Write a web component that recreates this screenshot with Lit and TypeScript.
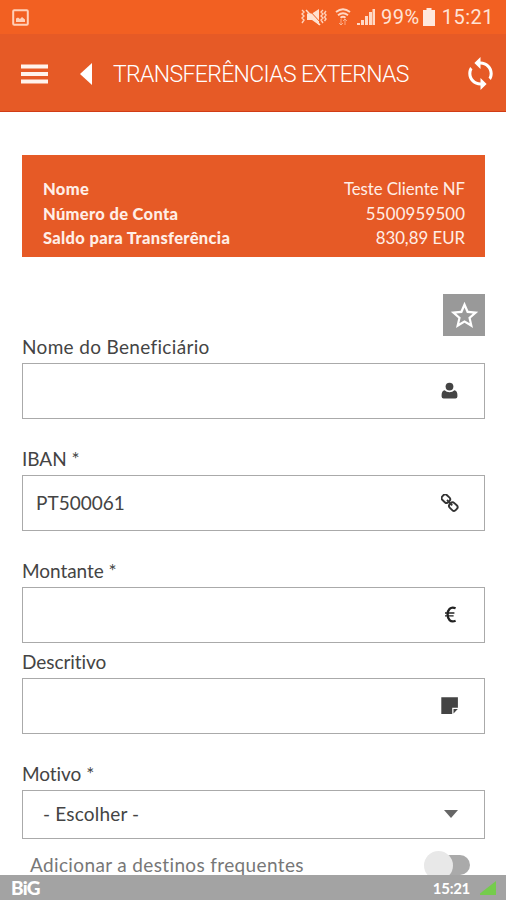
import { LitElement, html, css, svg } from "lit";
import { customElement } from "lit/decorators.js";

const icons = {
  user: svg`<circle cx="8.5" cy="4.600" r="3.900"/><path d="M3.600 8.200Q.6 9 .6 13v1.600q0 2 2 2h11.800q2 0 2-2V13q0-4-3-4.800Q11.500 10.200 8.500 10.200T3.600 8.200Z"/>`,
  link: svg`<g fill="none" stroke="#333" stroke-width="1.900"><rect x="-4.200" y="-3.300" width="8.400" height="6.600" rx="2.600" transform="translate(4.900 4.700) rotate(43)"/><rect x="-4.200" y="-3.300" width="8.400" height="6.600" rx="2.600" transform="translate(12.300 12.600) rotate(43)"/><path d="M6 6l5.200 5.400"/></g>`,
  euro: svg`<path fill="none" stroke="#222" stroke-width="2.300" d="M14.600 2.300C9.200.200 6.600 4 6.600 8.500s2.600 8.300 8 6.200"/><path stroke="#222" stroke-width="1.300" d="M4 7h9.400M4 9.900h8.600"/>`,
  note: svg`<path d="M.3.200h16.600v10.500h-5.700v6.200H.3Z"/><path d="M12.500 12h4.300l-4.300 4.600Z"/>`,
};

@customElement("app-root")
export class AppRoot extends LitElement {
  static styles = css`
    :host { display: flex; flex-direction: column; height: 900px; overflow: hidden; background: #fff; color: #444; font-family: Lato, sans-serif; font-size: 19px; font-variant-ligatures: none; box-sizing: border-box; }
    * { box-sizing: border-box; }
    svg { display: block; flex: none; }
    .status { height: 34px; flex: none; background: #f26022; display: flex; align-items: center; padding: 0 12px 0 12px; color: #ffe3d5; font-family: Roboto, sans-serif; font-size: 20px; }
    .status .right { margin-left: auto; display: flex; align-items: center; }
    .wifi { margin: 0 4px 0 0; }
    .battery { margin: 0 7px 0 3px; }
    .pct { margin-left: 6px; letter-spacing: .5px; }
    .clock { letter-spacing: .5px; }
    .header { height: 78px; flex: none; background: #e65a26; border-bottom: 1px solid #d13c16; display: flex; align-items: center; padding: 2px 11px 0 21px; color: #fff; }
    .back { margin-left: 32px; }
    .title { margin-left: 21px; padding-top: 2px; font-family: Roboto, sans-serif; font-weight: 300; font-size: 23px; white-space: nowrap; letter-spacing: -.65px; }
    .sync { margin-left: auto; }
    .content { flex: 1; min-height: 0; overflow: hidden; padding: 43px 21px 0 22px; display: flex; flex-direction: column; }
    .card { height: 102px; flex: none; background: #e65a26; color: #ffeee6; padding: 22px 20px 0 21px; font-size: 16.800px; }
    .row { height: 24.500px; display: flex; justify-content: space-between; align-items: center; line-height: 24px; }
    .row b { font-weight: 900; font-size: 16.500px; letter-spacing: .32px; }
    .star { width: 42px; height: 42px; flex: none; background: #999; margin: 37px 0 0; align-self: flex-end; display: grid; place-items: center; }
    .label { height: 27px; flex: none; line-height: 21px; white-space: nowrap; letter-spacing: .33px; }
    .label.tight { letter-spacing: -.05px; }
    .box { height: 56px; flex: none; border: 1.500px solid #aaa; display: flex; align-items: center; padding: 0 25px 1px 13px; margin-bottom: 29px; }
    .box svg { margin-left: auto; margin-top: 1px; fill: #444; }
    .box.close { margin-bottom: 8px; }
    .box.select { height: 49px; padding: 0 26px 2px 20px; margin-bottom: 11px; letter-spacing: .18px; }
    .toggle-row { display: flex; justify-content: space-between; color: #777; padding: 0 15px 0 8px; height: 26px; align-items: flex-start; flex: none; letter-spacing: .36px; line-height: 29px; white-space: nowrap; }
    .toggle { width: 47px; height: 30px; flex: none; display: flex; align-items: center; }
    .knob { width: 29px; height: 29px; border-radius: 50%; background: #e8e8e8; flex: none; }
    .track { width: 32px; height: 20px; flex: none; border-radius: 10px; background: #aaa; margin: 0 -46px 0 15px; }
    .footer { height: 25px; flex: none; background: #a3a3a3; color: #fff; display: flex; align-items: center; padding: 0 10px 0 11px; font-size: 15px; }
    .brand { font-weight: 900; font-size: 19px; letter-spacing: -.8px; }
    .time { margin-left: auto; margin-right: 10px; font-weight: 700; letter-spacing: -.3px; }
  `;

  private row(name: string, value: string, spacing: number) {
    return html`<div class="row"><b>${name}</b><span style="letter-spacing:${spacing}px;margin-right:${-spacing}px">${value}</span></div>`;
  }

  private field(label: string, icon: unknown, value = "", close = false, tight = false) {
    return html`<div class="label ${tight ? "tight" : ""}">${label}</div>
      <div class="box ${close ? "close" : ""}"><span>${value}</span><svg width="18" height="18" viewBox="0 0 18 18">${icon}</svg></div>`;
  }

  render() {
    return html`
      <div class="status">
        <svg width="17" height="17" viewBox="0 0 17 17" fill="none"><rect x="1.200" y="1.200" width="14.600" height="14.600" rx="1" stroke="#ffd0b8" stroke-width="2"/><path fill="#ffd0b8" d="M4 13V9.500l2-1 2 1.500 2-2 3 2.500V13Z"/></svg>
        <div class="right">
          <svg width="26" height="18" viewBox="0 0 26 18"><g fill="none" stroke="#ffd0b8" stroke-width="1.400"><path d="M1 2l2 2-2 2 2 2-2 2 2 2-2 3M22 2l-2 2 2 2-2 2 2 2-2 2 2 3M25 3l-1.500 2 1.500 2-1.500 2 1.500 2-1.500 2"/></g><path fill="#ffe0cf" d="M6 5.500h5L18 1v16l-7-5H6Z"/><path stroke="#f26022" stroke-width="1" d="M8 2l12 13"/><path stroke="#ffe0cf" stroke-width="1.500" d="M5 2l14 15"/></svg>
          <svg class="wifi" width="26" height="18" viewBox="0 0 26 18"><g fill="none" stroke="#ffd8c5" stroke-width="1.900"><path d="M9 4q7-5.500 14 0M11 7.200q5-4 10 0M13.500 9.800q2.500-2 5 0"/><path d="M14 11v6M12 15l2 2 2-2M18 17v-6M16 13l2-2 2 2" stroke-width="1" opacity=".6"/></g></svg>
          <svg width="18" height="18" viewBox="0 0 18 18" fill="#ffd8c5"><path d="M0 15h3v2H0zM4 12h3v5H4zM8 8h3v9H8zM12 4h3v13h-3zM15.500 1H18v16h-2.500z"/></svg>
          <span class="pct">99%</span>
          <svg class="battery" width="12" height="18" viewBox="0 0 12 18"><path fill="#ffe8dd" d="M3.500 0h5v2H12v16H0V2h3.500Z"/></svg>
          <span class="clock">15:21</span>
        </div>
      </div>
      <div class="header">
        <svg width="27" height="20" viewBox="0 0 27 20" fill="#fff3ec"><path d="M0 .500h27v4H0zM0 8h27v4H0zM0 15.500h27v4H0z"/></svg>
        <svg class="back" width="12" height="22" viewBox="0 0 12 22"><path fill="#fff" d="M12 0v22L0 11Z"/></svg>
        <div class="title">TRANSFERÊNCIAS EXTERNAS</div>
        <svg class="sync" width="29" height="33" viewBox="2.500 1 19 22" preserveAspectRatio="none"><path fill="#fff" d="M12 4V1L8 5l4 4V6c3.310 0 6 2.690 6 6 0 1.010-.250 1.970-.700 2.800l1.460 1.460C19.540 15.030 20 13.570 20 12c0-4.420-3.580-8-8-8zm0 14c-3.310 0-6-2.690-6-6 0-1.010.250-1.970.700-2.800L5.240 7.740C4.460 8.970 4 10.430 4 12c0 4.420 3.580 8 8 8v3l4-4-4-4v3z"/></svg>
      </div>
      <div class="content">
        <div class="card">
          ${this.row("Nome", "Teste Cliente NF", -0.05)}
          ${this.row("Número de Conta", "5500959500", 0.2)}
          ${this.row("Saldo para Transferência", "830,89 EUR", 0)}
        </div>
        <div class="star"><svg width="33" height="33" viewBox="0 0 24 24"><path fill="#fff" d="M22 9.240l-7.190-.620L12 2 9.190 8.630 2 9.240l5.460 4.730L5.820 21 12 17.270 18.180 21l-1.630-7.030L22 9.240zM12 15.400l-3.760 2.270 1-4.280-3.320-2.880 4.380-.380L12 6.100l1.710 4.040 4.380.380-3.320 2.880 1 4.280L12 15.400z"/></svg></div>
        ${this.field("Nome do Beneficiário", icons.user)}
        ${this.field("IBAN *", icons.link, "PT500061", false, true)}
        ${this.field("Montante *", icons.euro, "", true, true)}
        ${this.field("Descritivo", icons.note, "", false, true)}
        <div class="label tight">Motivo *</div>
        <div class="box select"><span>- Escolher -</span><svg width="14" height="8" viewBox="0 0 14 8"><path d="M0 0h14L7 8Z" fill="#666"/></svg></div>
        <div class="toggle-row"><span>Adicionar a destinos frequentes</span><div class="toggle"><div class="track"></div><div class="knob"></div></div></div>
      </div>
      <div class="footer"><span class="brand">BiG</span><span class="time">15:21</span><svg width="16" height="14" viewBox="0 0 16 14"><path fill="#75cc4c" d="M16 0v14H0v-1.500Z"/></svg></div>
    `;
  }
}
